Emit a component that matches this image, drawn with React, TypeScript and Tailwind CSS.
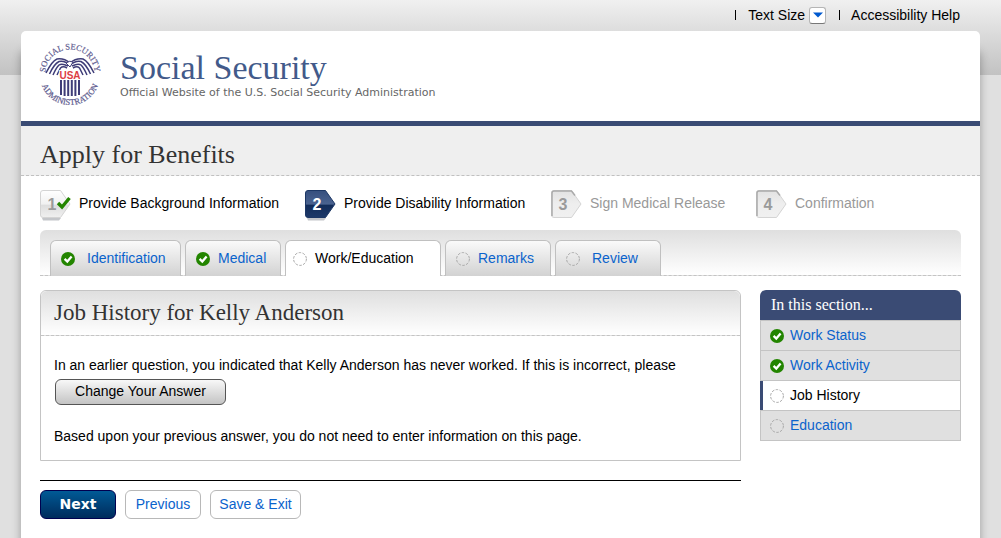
import React from 'react';
import clsx from 'clsx';

type Status = 'done' | 'todo';

const StatusIcon: React.FC<{ status: Status }> = ({ status }) => (
    <svg className="size-[14px] shrink-0" viewBox="0 0 14 14" fill="none" aria-hidden="true">
        {status === 'done' ? (
            <>
                <circle cx="7" cy="7" r="7" fill="#238500" />
                <path d="M3.6 6.9L6.3 9.6L10.6 4.6" stroke="#fff" strokeWidth="2.3" />
            </>
        ) : (
            <circle cx="7" cy="7" r="6.4" stroke="#a8a8a8" strokeWidth="1" strokeDasharray="2.6 1.4" />
        )}
    </svg>
);

const Seal: React.FC = () => (
    <svg className="size-[62px] shrink-0 overflow-visible" viewBox="0 0 62 62" role="img" aria-label="Social Security Administration seal">
        <defs>
            <path id="sealTop" d="M6.500 34A24.800 24.800 0 1 1 55.500 34" />
            <path id="sealBottom" d="M1 31A30 30 0 0 0 61 31" />
        </defs>
        <g fill="#5f5d90" fontFamily="'Liberation Serif', serif" fontSize="8.5" textAnchor="middle" stroke="#5f5d90" strokeWidth=".2">
            <text><textPath href="#sealTop" startOffset="50%">SOCIAL SECURITY</textPath></text>
            <text><textPath href="#sealBottom" startOffset="50%">ADMINISTRATION</textPath></text>
        </g>
        <g fill="none" stroke="#3f3d78" strokeWidth="1.5">
            <path d="M31 19Q25 14 18 15Q13 17 7 29" />
            <path d="M31 21Q25 16 20 17.500Q15 20 10.500 30" />
            <path d="M29 22Q23 19 20 21Q17 24 14 31" />
            <path d="M28 24Q24 21.500 21.500 24L18 31" />
            <path d="M31 19Q37 14 44 15Q49 17 55 29" />
            <path d="M31 21Q37 16 42 17.500Q47 20 51.500 30" />
            <path d="M33 22Q39 19 42 21Q45 24 48 31" />
            <path d="M34 24Q38 21.500 40.500 24L44 31" />
            <path d="M27 19Q31 16 34 18L31 23Z" fill="#fff" strokeWidth="1" />
        </g>
        <path d="M22 36V51M25.600 36V52M29.200 36V52M32.800 36V52M36.400 36V52M40 36V51" stroke="#3f3d78" strokeWidth="2" />
        <text x="31" y="34.500" fill="#dd3d45" stroke="#fff" strokeWidth="2" paintOrder="stroke" fontFamily="'Liberation Sans', sans-serif" fontSize="10" fontWeight="bold" textAnchor="middle">USA</text>
    </svg>
);

const BADGE = 'M3 .5H20.500L30 14L20.500 27.500H3Q.5 27.500 .5 25V3Q.5 .5 3 .5Z';

const StepBadge: React.FC<{ number: number; state: string }> = ({ number, state }) => {
    const current = state === 'current';
    const raised = current || state === 'done';
    return (
        <svg className="h-[31px] w-[31px] shrink-0" viewBox="0 0 31 31" aria-hidden="true">
            <defs>
                <linearGradient id={`step${number}`} x2="0" y2="1">
                    <stop offset="0" stopColor={current ? '#354f7e' : state === 'done' ? '#fff' : '#e2e2e2'} />
                    <stop offset=".5" stopColor={current ? '#4a6390' : state === 'done' ? '#f1f1f1' : '#eee'} />
                    <stop offset=".55" stopColor={current ? '#122c59' : state === 'done' ? '#dedede' : '#eee'} />
                    <stop offset="1" stopColor={current ? '#1d3969' : '#f0f0f0'} />
                </linearGradient>
            </defs>
            {raised && <path d="M2 28H21L19 30.500H3Z" fill="#c4c6ca" />}
            <path d={BADGE} fill={`url(#step${number})`} stroke={current ? '#1c3765' : '#d4d4d4'} />
            {!raised && <path d="M1 26V3Q1 1 3 1H20.500L24 5.500" fill="none" stroke="#aaa" strokeWidth="1.5" />}
            <text x="12" y="19.500" textAnchor="middle" fill={current ? '#fff' : '#9a9a9a'} fontFamily="'Liberation Sans', sans-serif" fontSize="16" fontWeight="bold">{number}</text>
            {state === 'done' && <path d="M18 13L22 17L29.500 8" fill="none" stroke="#238500" strokeWidth="3.4" />}
        </svg>
    );
};

const steps = [
    { label: 'Provide Background Information', state: 'done' },
    { label: 'Provide Disability Information', state: 'current' },
    { label: 'Sign Medical Release', state: 'todo' },
    { label: 'Confirmation', state: 'todo' },
];

const tabs: { label: string; status: Status; active?: boolean; className: string }[] = [
    { label: 'Identification', status: 'done', className: 'w-[131px] gap-3' },
    { label: 'Medical', status: 'done', className: 'w-24 gap-2' },
    { label: 'Work/Education', status: 'todo', active: true, className: 'w-[156px] gap-2' },
    { label: 'Remarks', status: 'todo', className: 'w-[106px] gap-2' },
    { label: 'Review', status: 'todo', className: 'w-[106px] gap-3' },
];

const sections: { label: string; status: Status; active?: boolean }[] = [
    { label: 'Work Status', status: 'done' },
    { label: 'Work Activity', status: 'done' },
    { label: 'Job History', status: 'todo', active: true },
    { label: 'Education', status: 'todo' },
];

const TopLinks: React.FC = () => (
    <div className="flex h-[31px] items-center justify-end pr-5 pb-px">
        <div className="flex items-center border-l border-black pl-3 leading-[10px]">
            <span id="text-size">Text Size</span>
        </div>
        <button aria-labelledby="text-size" className="ml-1 flex h-[17px] w-[17px] items-center justify-center rounded-[3px] border border-[#b5b5b5] border-b-[#777] bg-white">
            <svg className="h-[6px] w-[10px]" viewBox="0 0 10 6"><path d="M0 .5H10L5 5.500Z" fill="#0059cf" /></svg>
        </button>
        <a href="#help" className="ml-[13px] border-l border-black pl-[11px] leading-[10px]">Accessibility Help</a>
    </div>
);

const Steps: React.FC = () => (
    <ol className="mt-[14px] grid grid-cols-[265px_246px_205px_1fr]">
        {steps.map((step, i) => (
            <li key={step.label} className={clsx('flex gap-2 whitespace-nowrap', step.state === 'todo' && 'text-[#999]')}>
                <StepBadge number={i + 1} state={step.state} />
                <span className="leading-[26px]">{step.label}</span>
            </li>
        ))}
    </ol>
);

const Tabs: React.FC = () => (
    <nav className="mt-[9px] flex items-end gap-1 rounded-t-md border-b border-dashed border-[#c4c4c4] bg-linear-to-b from-[#dfdfdf] to-white px-[10px] pt-[10px]">
        {tabs.map((tab) => (
            <a
                key={tab.label}
                href="#tab"
                className={clsx(
                    '-mb-px flex h-9 items-center rounded-t-md border border-b-0 border-[#c0c0c0]',
                    tab.className,
                    tab.active ? 'bg-white pl-[7px] text-black' : 'bg-linear-to-b from-[#fafafa] to-[#d2d2d2] pl-[10px] text-[#0a63cc]'
                )}
            >
                <StatusIcon status={tab.status} />
                <span>{tab.label}</span>
            </a>
        ))}
    </nav>
);

const JobHistory: React.FC = () => (
    <section className="rounded-t-md border border-[#c4c4c4]">
        <h2 className="rounded-t-md border-b border-dashed border-[#c4c4c4] bg-linear-to-b from-[#dfdfdf] to-white px-[13px] font-['Georgia','Liberation_Serif',serif] text-[23px] leading-[44px] text-[#333]">
            Job History for Kelly Anderson
        </h2>
        <div className="px-[13px] pb-[14px] pt-[19px]">
            <p className="leading-5">In an earlier question, you indicated that Kelly Anderson has never worked. If this is incorrect, please</p>
            <button className="ml-px mt-1 block h-[26px] w-[171px] rounded-md border border-[#555] bg-linear-to-b from-[#f8f8f8] to-[#c4c4c4] pb-[2px] leading-5">
                Change Your Answer
            </button>
            <p className="mt-[21px] leading-5">Based upon your previous answer, you do not need to enter information on this page.</p>
        </div>
    </section>
);

const SectionNav: React.FC = () => (
    <aside className="w-[201px] shrink-0">
        <h3 className="rounded-t-md bg-[#3a4b74] px-[11px] font-['Georgia','Liberation_Serif',serif] text-[16px] leading-[30px] text-white">In this section...</h3>
        <ul className="border-x border-[#c4c4c4]">
            {sections.map((item) => (
                <li key={item.label} className={clsx('h-[30px] border-t border-[#c4c4c4] last:h-[31px] last:border-b', item.active ? '-ml-px bg-white' : 'bg-[#e0e0e0]')}>
                    <a href="#section" className={clsx('flex h-[29px] items-center gap-[6px]', item.active ? 'border-l-[3px] border-[#3a4b74] pl-[7px] text-black' : 'pl-[9px] text-[#0a63cc]')}>
                        <StatusIcon status={item.status} />
                        {item.label}
                    </a>
                </li>
            ))}
        </ul>
    </aside>
);

const App: React.FC = () => (
    <div className="flex min-h-screen flex-col bg-[#e0e0e0] bg-[linear-gradient(#f0f0f0,#c2c2c2)] bg-[length:100%_75px] bg-no-repeat px-[21px] font-['Liberation_Sans',Arial,sans-serif] text-[14px] text-black">
        <TopLinks />
        <div className="flex-1 rounded-t-[5px] bg-white shadow-[0_20px_10px_rgba(0,0,0,0.3)]">
            <header className="flex h-[95px] border-b-[5px] border-[#3a4b74] pl-[18px] pt-[13px]">
                <Seal />
                <div className="ml-[19px] pt-[5px]">
                    <h1 className="font-['Georgia','Liberation_Serif',serif] text-[34px] leading-[38px] text-[#425a8a]">Social Security</h1>
                    <p className="font-['DejaVu_Sans',Verdana,sans-serif] text-[11px] leading-3 text-[#666]">Official Website of the U.S. Social Security Administration</p>
                </div>
            </header>
            <h2 className="border-b border-dashed border-[#c0c0c0] bg-[#efefef] pl-[19px] pt-[9px] font-['Georgia','Liberation_Serif',serif] text-[26px] leading-10 text-[#333]">
                Apply for Benefits
            </h2>
            <main className="px-[19px] pb-[19px]">
                <Steps />
                <Tabs />
                <div className="mt-[14px] flex items-start gap-[19px]">
                    <div className="flex-1">
                        <JobHistory />
                        <div className="mt-[19px] flex gap-[9px] border-t border-black pt-[9px]">
                            <button className="h-[29px] w-[76px] rounded-md border border-[#00004f] bg-linear-to-b from-[#005a96] to-[#002c5c] font-['DejaVu_Sans',Verdana,sans-serif] font-bold text-white">Next</button>
                            <button className="h-[29px] w-[76px] rounded-md border border-[#b8b8b8] bg-white text-[#0a63cc]">Previous</button>
                            <button className="h-[29px] w-[91px] rounded-md border border-[#b8b8b8] bg-white text-[#0a63cc]">Save &amp; Exit</button>
                        </div>
                    </div>
                    <SectionNav />
                </div>
            </main>
        </div>
    </div>
);

export default App;
